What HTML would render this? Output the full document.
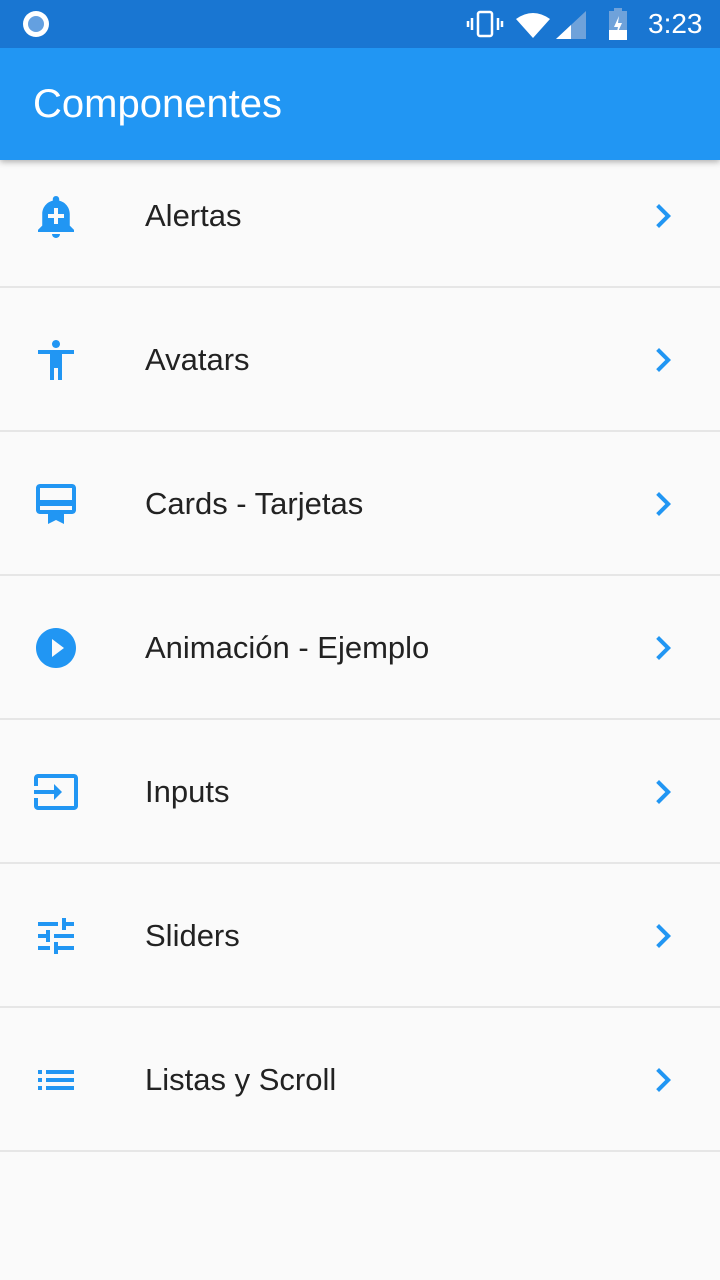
<!DOCTYPE html><html><head><style>
body{margin:0;width:720px;height:1280px;background:#fafafa;font-family:"Liberation Sans",sans-serif;position:relative;overflow:hidden}
.sb{position:absolute;top:0;left:0;width:720px;height:48px;background:#1976D2;z-index:3}
.ab{position:absolute;top:48px;left:0;width:720px;height:112px;background:#2196F3;box-shadow:0 2px 6px rgba(0,0,0,.3);z-index:2}
.ab span{position:absolute;left:33px;top:34px;color:#fff;font-size:40px}
.row{position:absolute;left:0;width:720px;height:142px;border-bottom:2px solid #e6e6e6}
.row svg.i{position:absolute;left:32px;top:48px;width:48px;height:48px;fill:#2196F3}
.row svg.c{position:absolute;left:639px;top:48px;width:48px;height:48px;fill:#2196F3}
.row span{position:absolute;left:145px;top:0;line-height:144px;font-size:31px;color:#222}
</style></head><body>
<div class="sb">
<svg style="position:absolute;left:22px;top:10px" width="28" height="28"><circle cx="14" cy="14" r="13" fill="#fff"/><circle cx="14" cy="14" r="8" fill="#64a0e0"/></svg>
<svg style="position:absolute;left:466px;top:10px" width="40" height="28" fill="none" stroke="#fff" stroke-width="2.5"><rect x="12" y="2" width="14" height="24" rx="2"/><line x1="6" y1="8" x2="6" y2="20"/><line x1="2" y1="11" x2="2" y2="17"/><line x1="32" y1="8" x2="32" y2="20"/><line x1="36" y1="11" x2="36" y2="17"/></svg>
<svg style="position:absolute;left:515px;top:11px" width="36" height="28"><path d="M1 8 Q18 -4 35 8 L18 27Z" fill="#fff"/></svg>
<svg style="position:absolute;left:556px;top:11px" width="32" height="28"><path d="M30 0V28H0Z" fill="#6fa2da"/><path d="M15 14V28H0Z" fill="#fff"/></svg>
<svg style="position:absolute;left:608px;top:8px" width="20" height="32"><rect x="6" y="0" width="8" height="4" fill="#6fa2da"/><rect x="1" y="3" width="18" height="29" fill="#6fa2da"/><path d="M1 22H19V32H1Z" fill="#fff"/><path d="M11 8L6 19H10L8 28L14 15H10Z" fill="#fff"/></svg>
<span style="position:absolute;left:648px;top:8px;color:#fff;font-size:28px">3:23</span>
</div>
<div class="ab"><span>Componentes</span></div>
<div class="row" style="top:144px"><svg class="i" viewBox="0 0 24 24"><path d="M10.01 21.01c0 1.1.89 1.99 1.99 1.99s1.99-.89 1.99-1.99h-3.98zm8.87-4.19V11c0-3.25-2.25-5.97-5.28-6.69v-.72C13.6 2.71 12.88 2 12 2s-1.6.71-1.6 1.59v.72C7.37 5.03 5.12 7.75 5.12 11v5.82L3 18.94V20h18v-1.06l-2.12-2.12zM16 13.01h-3v3h-2v-3H8V11h3V8h2v3h3v2.01z"/></svg><span>Alertas</span><svg class="c" viewBox="0 0 24 24"><path d="M8.59 16.59L13.17 12 8.59 7.41 10 6l6 6-6 6z"/></svg></div>
<div class="row" style="top:288px"><svg class="i" viewBox="0 0 24 24"><path d="M12 2c1.1 0 2 .9 2 2s-.9 2-2 2-2-.9-2-2 .9-2 2-2zm9 7h-6v13h-2v-6h-2v6H9V9H3V7h18v2z"/></svg><span>Avatars</span><svg class="c" viewBox="0 0 24 24"><path d="M8.59 16.59L13.17 12 8.59 7.41 10 6l6 6-6 6z"/></svg></div>
<div class="row" style="top:432px"><svg class="i" viewBox="0 0 24 24"><path d="M20 2H4c-1.11 0-2 .89-2 2v11c0 1.11.89 2 2 2h4v5l4-2 4 2v-5h4c1.11 0 2-.89 2-2V4c0-1.11-.89-2-2-2zm0 13H4v-2h16v2zm0-5H4V4h16v6z"/></svg><span>Cards - Tarjetas</span><svg class="c" viewBox="0 0 24 24"><path d="M8.59 16.59L13.17 12 8.59 7.41 10 6l6 6-6 6z"/></svg></div>
<div class="row" style="top:576px"><svg class="i" viewBox="0 0 24 24"><path d="M12 2C6.48 2 2 6.48 2 12s4.48 10 10 10 10-4.48 10-10S17.52 2 12 2zm-2 14.5v-9l6 4.5-6 4.5z"/></svg><span>Animación - Ejemplo</span><svg class="c" viewBox="0 0 24 24"><path d="M8.59 16.59L13.17 12 8.59 7.41 10 6l6 6-6 6z"/></svg></div>
<div class="row" style="top:720px"><svg class="i" viewBox="0 0 24 24"><path d="M21 3.01H3c-1.1 0-2 .9-2 2V9h2V4.99h18v14.03H3V15H1v4.01c0 1.1.9 1.98 2 1.98h18c1.1 0 2-.88 2-1.98v-14c0-1.11-.9-2-2-2zM11 16l4-4-4-4v3H1v2h10v3z"/></svg><span>Inputs</span><svg class="c" viewBox="0 0 24 24"><path d="M8.59 16.59L13.17 12 8.59 7.41 10 6l6 6-6 6z"/></svg></div>
<div class="row" style="top:864px"><svg class="i" viewBox="0 0 24 24"><path d="M3 17v2h6v-2H3zM3 5v2h10V5H3zm10 16v-2h8v-2h-8v-2h-2v6h2zM7 9v2H3v2h4v2h2V9H7zm14 4v-2H11v2h10zm-6-4h2V7h4V5h-4V3h-2v6z"/></svg><span>Sliders</span><svg class="c" viewBox="0 0 24 24"><path d="M8.59 16.59L13.17 12 8.59 7.41 10 6l6 6-6 6z"/></svg></div>
<div class="row" style="top:1008px"><svg class="i" viewBox="0 0 24 24"><path d="M3 13h2v-2H3v2zm0 4h2v-2H3v2zm0-8h2V7H3v2zm4 4h14v-2H7v2zm0 4h14v-2H7v2zM7 7v2h14V7H7z"/></svg><span>Listas y Scroll</span><svg class="c" viewBox="0 0 24 24"><path d="M8.59 16.59L13.17 12 8.59 7.41 10 6l6 6-6 6z"/></svg></div>
</body></html>
